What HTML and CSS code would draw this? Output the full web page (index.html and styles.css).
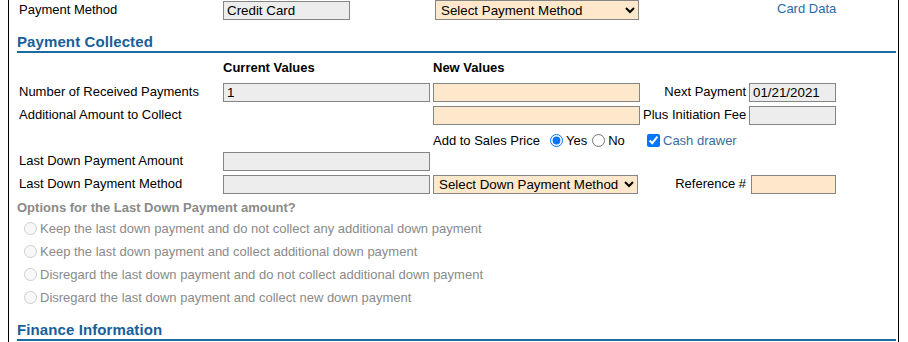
FILE: index.html
```html
<!DOCTYPE html>
<html lang="en">
<head>
    <meta charset="UTF-8">
    <meta name="viewport" content="width=device-width, initial-scale=1.0">
    <title>Payment</title>
    <link rel="stylesheet" href="styles.css">
</head>
<body>
    <div class="panel">
        <!-- metodo de pago -->
        <div class="row top-row">
            <span class="label">Payment Method</span>
            <span><input type="text" class="field field-gray field-short" value="Credit Card" readonly></span>
            <span>
                <select class="field field-peach pick pick-main">
                    <option>Select Payment Method</option>
                </select>
            </span>
            <span></span>
            <span><a href="#" class="card-link">Card Data</a></span>
        </div>

        <h3 class="section-title">Payment Collected</h3>

        <div class="row head-row">
            <span></span>
            <span class="col-head">Current Values</span>
            <span class="col-head">New Values</span>
        </div>

        <div class="row">
            <span class="label">Number of Received Payments</span>
            <span><input type="text" class="field field-gray" value="1" readonly></span>
            <span><input type="text" class="field field-peach"></span>
            <span class="side-label">Next Payment</span>
            <span><input type="text" class="field field-gray field-side" value="01/21/2021" readonly></span>
        </div>

        <div class="row">
            <span class="label">Additional Amount to Collect</span>
            <span></span>
            <span><input type="text" class="field field-peach"></span>
            <span class="side-label">Plus Initiation Fee</span>
            <span><input type="text" class="field field-gray field-side" readonly></span>
        </div>

        <div class="row choice-row">
            <span></span>
            <span></span>
            <span class="inline">
                Add to Sales Price
                <input type="radio" name="add-price" id="add-yes" class="first-radio" checked>
                <label for="add-yes">Yes</label>
                <input type="radio" name="add-price" id="add-no">
                <label for="add-no">No</label>
            </span>
            <span class="inline drawer">
                <input type="checkbox" id="cash-drawer" checked>
                <label for="cash-drawer">Cash drawer</label>
            </span>
        </div>

        <div class="row">
            <span class="label">Last Down Payment Amount</span>
            <span><input type="text" class="field field-gray" readonly></span>
        </div>

        <div class="row">
            <span class="label">Last Down Payment Method</span>
            <span><input type="text" class="field field-gray" readonly></span>
            <span>
                <select class="field field-peach pick">
                    <option>Select Down Payment Method</option>
                </select>
            </span>
            <span class="side-label">Reference #</span>
            <span><input type="text" class="field field-peach field-ref"></span>
        </div>

        <div class="options">
            <p class="options-title">Options for the Last Down Payment amount?</p>
            <div class="option"><input type="radio" name="down-opt" disabled> Keep the last down payment and do not collect any additional down payment</div>
            <div class="option"><input type="radio" name="down-opt" disabled> Keep the last down payment and collect additional down payment</div>
            <div class="option"><input type="radio" name="down-opt" disabled> Disregard the last down payment and do not collect additional down payment</div>
            <div class="option"><input type="radio" name="down-opt" disabled> Disregard the last down payment and collect new down payment</div>
        </div>

        <h3 class="section-title finance">Finance Information</h3>
    </div>
</body>
</html>
```

FILE: styles.css
```css
body { font-family: Arial, "Liberation Sans", sans-serif; font-size: 13px; color: #000; margin: 0 9px 0 8px; background-color: #fff; overflow: hidden; }
.panel { border-left: 1px solid #000; border-right: 1px solid #000; padding: 0 2px 10px 8px; }
.row { display: grid; grid-template-columns: 206px 210px 210px 106px 1fr; height: 23px; align-items: center; white-space: nowrap; }
.top-row { height: 20px; }
.head-row { height: 20px; margin: 4px 0; }
.choice-row { height: 23px; margin-top: 2px; margin-bottom: -2px; }
.label { padding-left: 2px; margin-top: -2px; }
.col-head { font-weight: bold; }
.side-label { text-align: right; padding-right: 3px; margin-top: -2px; }
.field { box-sizing: border-box; height: 19px; width: 207px; margin: 0; padding: 0 3px; border: 1px solid #858585; border-radius: 0; font-family: Arial, "Liberation Sans", sans-serif; font-size: 13.33px; color: #000; display: block; }
.field-gray { background-color: #ededed; }
.field-peach { background-color: #fee8cb; }
.field-short { width: 127px; }
.field-side { width: 87px; }
.field-ref { width: 85px; margin-left: 2px; }
.pick { width: 205px; height: 19px; padding: 0 1px; }
.pick-main { width: 204px; height: 20px; margin-left: 2px; }
.card-link { color: #2b6aa6; text-decoration: none; margin-left: 28px; position: relative; top: -2px; }
.section-title { margin: 13px 0 0; font-size: 15px; line-height: 18px; font-weight: bold; color: #17609a; border-bottom: 2px solid #1b6c9e; letter-spacing: 0.1px; }
.inline { display: flex; align-items: center; }
.inline input { margin: 0 3px 0 5px; }
.inline .first-radio { margin-left: 10px; }
.drawer { color: #3c6c9c; }
.drawer input { margin-left: 4px; }
.options { margin-top: 2px; color: #8a8a8a; }
.options-title { margin: 0; height: 19px; line-height: 20px; font-weight: bold; }
.option { height: 23px; display: flex; align-items: center; }
.option input { margin: 0 3px 0 7px; }
.finance { margin-top: 12px; }
```
